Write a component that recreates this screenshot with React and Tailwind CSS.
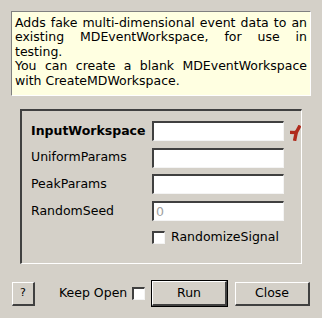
import React from 'react'

const sunken =
  'border-t-2 border-l-2 border-r border-b border-t-[#404040] border-l-[#404040] border-r-[#f4f4f4] border-b-[#f4f4f4]'
const raised =
  'border-t border-l border-r-2 border-b-2 border-t-white border-l-white border-r-[#404040] border-b-[#404040]'

function Field({ label, bold, placeholder, required }) {
  return (
    <div className="flex items-center h-[20px]">
      <div className={`w-[121px] text-[12.5px] text-black ${bold ? 'font-bold' : ''}`}>{label}</div>
      <input
        className={`w-[132px] h-[20px] bg-white px-[2px] text-[12.5px] outline-none placeholder:text-[#a0a0a0] ${sunken}`}
        placeholder={placeholder}
      />
      {required && (
        <svg className="ml-[6px] mt-[3px]" width="11" height="16" viewBox="0 0 11 16">
          <path
            d="M1.6 7.4 L6.2 7.6 M6.2 7.6 L9.2 2 M6.2 7.6 L4.9 14.2"
            stroke="#b02a1c"
            strokeWidth="3.4"
            strokeLinecap="square"
            strokeLinejoin="round"
            fill="none"
          />
        </svg>
      )}
    </div>
  )
}

function Check() {
  return <div className={`w-[13px] h-[13px] bg-white ${sunken}`}></div>
}

export default function App() {
  return (
    <div
      className="w-[322px] h-[318px] bg-[#d4d0c8] pt-[11px] flex flex-col text-black"
      style={{ fontFamily: '"DejaVu Sans", sans-serif' }}
    >
      {/* Description */}
      <div className="ml-[11px] w-[300px] h-[85px] bg-[#ffffe1] border-t border-l border-r border-b border-t-[#808080] border-l-[#808080] border-r-white border-b-white pl-[3px] pr-[3px] pt-[4px] text-[12.5px] leading-[14.4px]">
        <p className="text-justify">
          Adds fake multi-dimensional event data to an existing MDEventWorkspace, for use in testing.
        </p>
        <p className="text-justify">
          You can create a blank MDEventWorkspace with CreateMDWorkspace.
        </p>
      </div>

      {/* Properties */}
      <div className="ml-[20px] mt-[13px] w-[282px] h-[155px] border-t-2 border-l-2 border-r border-b border-t-[#404040] border-l-[#404040] border-r-white border-b-white pl-[9px] pt-[10px] flex flex-col gap-[6.7px]">
        <Field label="InputWorkspace" bold required />
        <Field label="UniformParams" />
        <Field label="PeakParams" />
        <Field label="RandomSeed" placeholder="0" />
        <div className="flex items-center ml-[121px] mt-[3px] h-[13px]">
          <Check />
          <span className="ml-[6px] text-[12.5px]">RandomizeSignal</span>
        </div>
      </div>

      {/* Buttons */}
      <div className="flex items-center mt-[16px] h-[27px] pl-[12px] text-[12.5px]">
        <button className={`w-[23px] h-[24px] bg-[#d4d0c8] text-[11px] ${raised}`}>?</button>
        <span className="ml-[24px] w-[68px] whitespace-nowrap">Keep Open</span>
        <div className="ml-[5px]">
          <Check />
        </div>
        <div className="ml-[6px] w-[77px] h-[27px] border border-black">
          <button className={`w-full h-full bg-[#d4d0c8] ${raised}`}>Run</button>
        </div>
        <button className={`ml-[7px] w-[75px] h-[24px] bg-[#d4d0c8] ${raised}`}>Close</button>
      </div>
    </div>
  )
}
